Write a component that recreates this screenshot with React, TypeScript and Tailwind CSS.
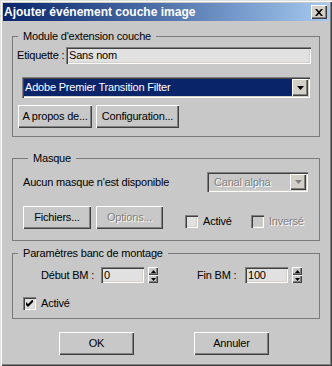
import React from "react";

const raised =
  "shadow-[inset_1px_1px_#ffffff,inset_-1px_-1px_#404040,inset_-2px_-2px_#808080]";
const sunken =
  "shadow-[inset_1px_1px_#808080,inset_2px_2px_#404040,inset_-1px_-1px_#ffffff,inset_-2px_-2px_#d4d0c8]";
const disabledText = "text-[#808080] [text-shadow:1px_1px_0_#ffffff]";

const Button = ({
  label,
  w,
  disabled,
}: {
  label: string;
  w: string;
  disabled?: boolean;
}) => (
  <div
    className={`${w} h-[23px] shrink-0 flex items-center justify-center bg-[#c8c8c8] ${raised} ${
      disabled ? disabledText : "text-black"
    }`}
  >
    {label}
  </div>
);

const ArrowDown = ({ color = "#000" }: { color?: string }) => (
  <svg width="7" height="4" viewBox="0 0 7 4">
    <path d="M0 0h7L3.5 4z" fill={color} />
  </svg>
);

const Check = ({ checked, disabled }: { checked?: boolean; disabled?: boolean }) => (
  <div
    className={`w-[13px] h-[13px] shrink-0 flex items-center justify-center ${
      disabled ? "bg-[#c8c8c8]" : "bg-[#e1e1e1]"
    } ${sunken}`}
  >
    {checked && (
      <svg width="7" height="7" viewBox="0 0 7 7">
        <path d="M0 2L2 4L7 -1V2L2 7L0 5Z" fill="#000" />
      </svg>
    )}
  </div>
);

const Spinner = () => (
  <div className="w-[10px] h-[16px] shrink-0 flex flex-col">
    <div className={`h-[8px] flex items-center justify-center bg-[#c8c8c8] ${raised}`}>
      <svg width="5" height="3" viewBox="0 0 5 3">
        <path d="M2.5 0L5 3H0z" fill="#000" />
      </svg>
    </div>
    <div className={`h-[8px] flex items-center justify-center bg-[#c8c8c8] ${raised}`}>
      <svg width="5" height="3" viewBox="0 0 5 3">
        <path d="M0 0h5L2.5 3z" fill="#000" />
      </svg>
    </div>
  </div>
);

// group box: the caption sits on the top border line
const Group = ({
  title,
  className,
  children,
}: {
  title: string;
  className: string;
  children: React.ReactNode;
}) => (
  <div className={`border border-[#7a7a7a] ${className}`}>
    <div className="-mt-[7px] ml-[5px] px-[5px] w-fit bg-[#c8c8c8] leading-[13px]">
      {title}
    </div>
    {children}
  </div>
);

export default function App() {
  return (
    <div className="w-[332px] h-[366px] overflow-hidden whitespace-nowrap bg-[#c8c8c8] pt-[3px] px-[3px] flex flex-col text-[11px] leading-[13px] tracking-[-0.2px] text-black font-['Liberation_Sans',Arial,sans-serif] shadow-[inset_1px_1px_#e0e0e0,inset_2px_2px_#ffffff,inset_-1px_-1px_#404040,inset_-2px_-2px_#808080]">
      {/* title bar */}
      <div className="h-[18px] shrink-0 flex items-center justify-between pl-px pr-[2px] bg-gradient-to-r from-[#0a246a] to-[#a6caf0]">
        <span className="text-white font-bold text-[12px] tracking-normal">
          Ajouter événement couche image
        </span>
        <div
          className={`w-[16px] h-[14px] flex items-center justify-center bg-[#d4d0c8] ${raised}`}
        >
          <svg width="8" height="7" viewBox="0 0 8 7">
            <path
              d="M0 0h2l2 2.2L6 0h2L5 3.5 8 7H6L4 4.8 2 7H0l3-3.5z"
              fill="#000"
            />
          </svg>
        </div>
      </div>

      <div className="px-[9px] flex flex-col">
        <Group title="Module d'extension couche" className="mt-[15px] pb-[8px]">
          <div className="mt-[4px] pl-[4px] flex items-center">
            <span className="w-[49px] shrink-0">Etiquette :</span>
            <div
              className={`w-[245px] h-[17px] shrink-0 pl-[3px] flex items-center bg-[#e1e1e1] ${sunken}`}
            >
              Sans nom
            </div>
          </div>
          <div
            className={`mt-[13px] ml-[9px] w-[288px] h-[21px] p-[2px] flex bg-[#c8c8c8] ${sunken}`}
          >
            <div className="flex-1 bg-[#0a246a] text-white pl-[1px] flex items-center">
              Adobe Premier Transition Filter
            </div>
            <div
              className={`w-[16px] h-[17px] flex items-center justify-center bg-[#d4d0c8] ${raised}`}
            >
              <ArrowDown />
            </div>
          </div>
          <div className="mt-[7px] ml-[5px] flex gap-[4px]">
            <Button label="A propos de..." w="w-[74px]" />
            <Button label="Configuration..." w="w-[83px]" />
          </div>
        </Group>

        <Group title="Masque" className="mt-[21px] pb-[11px] pl-[10px] pr-[11px]">
          <div className="mt-[7px] flex items-center">
            <span>Aucun masque n'est disponible</span>
            <div
              className={`ml-auto w-[101px] h-[20px] p-[2px] flex bg-[#c8c8c8] ${sunken}`}
            >
              <div className={`flex-1 pl-[5px] flex items-center ${disabledText}`}>
                Canal alpha
              </div>
              <div
                className={`w-[16px] h-[16px] flex items-center justify-center bg-[#d4d0c8] ${raised}`}
              >
                <ArrowDown color="#808080" />
              </div>
            </div>
          </div>
          <div className="mt-[14px] flex items-end">
            <Button label="Fichiers..." w="w-[68px]" />
            <div className="ml-[5px]">
              <Button label="Options..." w="w-[67px]" disabled />
            </div>
            <div className="ml-[22px] w-[66px] mb-px flex items-center gap-[5px]">
              <Check />
              <span>Activé</span>
            </div>
            <div className="mb-px flex items-center gap-[5px]">
              <Check disabled />
              <span className={disabledText}>Inversé</span>
            </div>
          </div>
        </Group>

        <Group title="Paramètres banc de montage" className="mt-[12px] pb-[8px]">
          <div className="mt-[7px] pl-[28px] flex items-center">
            <span className="w-[60px] shrink-0">Début BM :</span>
            <div
              className={`w-[43px] h-[16px] shrink-0 pl-[3px] flex items-center bg-[#e1e1e1] ${sunken}`}
            >
              0
            </div>
            <div className="ml-[4px]">
              <Spinner />
            </div>
            <span className="ml-[39px] w-[48px] shrink-0">Fin BM :</span>
            <div
              className={`w-[43px] h-[16px] shrink-0 pl-[3px] flex items-center bg-[#e1e1e1] ${sunken}`}
            >
              100
            </div>
            <div className="ml-[4px]">
              <Spinner />
            </div>
          </div>
          <div className="mt-[14px] pl-[10px] flex items-center gap-[5px]">
            <Check checked />
            <span>Activé</span>
          </div>
        </Group>

        <div className="mt-[13px] ml-[47px] flex gap-[60px]">
          <Button label="OK" w="w-[75px]" />
          <Button label="Annuler" w="w-[75px]" />
        </div>
      </div>
    </div>
  );
}
